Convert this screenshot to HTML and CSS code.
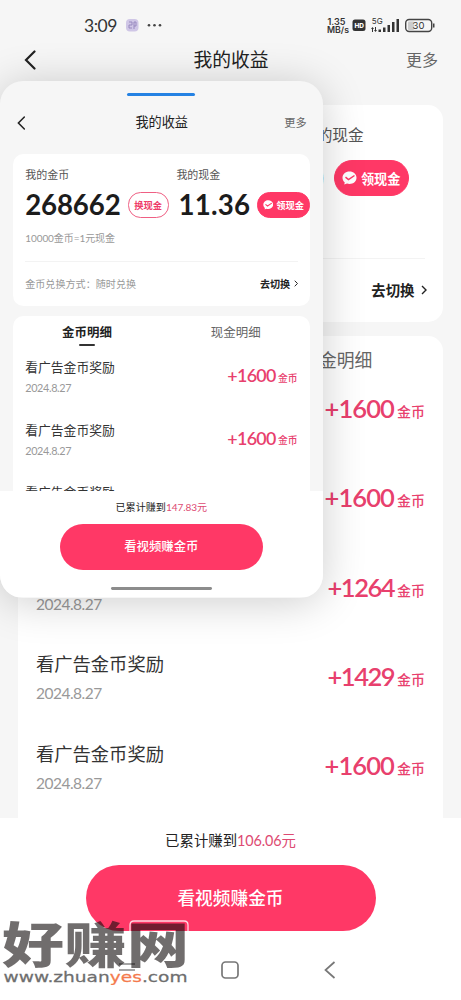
FILE: index.html
```html
<!DOCTYPE html>
<html lang="zh-CN">
<head>
<meta charset="utf-8">
<title>我的收益</title>
<link rel="stylesheet" href="styles.css">
</head>
<body>
<svg width="0" height="0" class="defs">
  <symbol id="back" viewBox="0 0 12 20"><path d="M10.500 1.500 2 10l8.500 8.500" fill="none" stroke="currentColor" stroke-width="2.200" stroke-linecap="round"/></symbol>
  <symbol id="next" viewBox="0 0 6 10"><path d="M1 1l4 4-4 4" fill="none" stroke="currentColor" stroke-width="1.400"/></symbol>
  <symbol id="badge" viewBox="0 0 15 14"><path d="M7.500.5c4 0 7 2.700 7 6.200s-3 6.200-7 6.200c-.9 0-1.800-.1-2.500-.4L2.300 13.600l.4-2.300C1.300 10.200.5 8.600.5 6.700.5 3.200 3.500.5 7.500.5z" fill="#fff"/><path d="M3.500 6.200l3 2.400L12.500 4.500" fill="none" stroke="#ff3866" stroke-width="1.500"/></symbol>
</svg>
<div class="screen">
  <div class="status">
    <span class="clock">3:09</span>
    <svg class="status-left" width="38" height="16" viewBox="0 0 38 16"><rect x="1" y="2" width="12.500" height="12.500" rx="4" fill="#cfc6e6"/><path d="M4 5h3v3H4v3h3M9 5v7M9 5h2v4H9" fill="none" stroke="#9384bb" stroke-width=".9"/><g fill="#444"><circle cx="24" cy="8.200" r="1.300"/><circle cx="29.500" cy="8.200" r="1.300"/><circle cx="35" cy="8.200" r="1.300"/></g></svg>
    <svg class="status-right" width="108" height="20" viewBox="327 15 108 20">
      <g font-family="Inter, sans-serif" fill="#333">
        <text x="327.500" y="25" font-size="8.500" font-weight="600" textLength="18" lengthAdjust="spacingAndGlyphs">1.35</text>
        <text x="327" y="33" font-size="8.500" font-weight="600" textLength="22" lengthAdjust="spacingAndGlyphs">MB/s</text>
        <rect x="352.500" y="19.500" width="13" height="11.500" rx="2.500"/>
        <text x="354.500" y="27.800" font-size="6.500" font-weight="800" fill="#fff" textLength="9.500">HD</text>
        <text x="371.800" y="24.300" font-size="8" textLength="11">5G</text>
        <path d="M371 29l1.500-2 1.500 2zM372 29h1v3h-1zM374 30h3l-1.500 2zM375 27h1v3h-1zM378.500 29.500h2.500V32h-2.500zM383 27.500h2.500V32H383zM387.500 25h2.500v7h-2.500zM392 22h2.500v10H392zM396.500 19h2.500v13h-2.500z"/>
      </g>
      <rect x="408" y="21.500" width="6" height="8.500" rx="1" fill="#ccc"/>
      <rect x="405.700" y="19.500" width="26" height="12" rx="3.500" fill="none" stroke="#444" stroke-width="1.400"/>
      <rect x="433" y="23.500" width="1.500" height="4" fill="#444"/>
      <text x="412.500" y="28.700" font-family="Inter, sans-serif" font-size="9.500" fill="#333" textLength="12">30</text>
    </svg>
  </div>

  <main class="page page-full">
    <header class="head"><svg class="back"><use href="#back"/></svg><h1>我的收益</h1><span class="more">更多</span></header>
    <section class="card balance">
      <div class="funds">
        <div class="fund"></div>
        <div class="fund"><span class="label">我的现金</span><div class="sum"><b>0</b><span class="pill solid"><svg><use href="#badge"/></svg>领现金</span></div></div>
      </div>
      <p class="rate"></p>
      <div class="switch"><span></span><strong>去切换<svg><use href="#next"/></svg></strong></div>
    </section>
    <section class="card detail">
      <nav class="tabs"><span></span><span>现金明细</span></nav>
      <div class="rows">
        <div class="row"><div></div><div class="gain">+1600<small>金币</small></div></div>
        <div class="row"><div></div><div class="gain">+1600<small>金币</small></div></div>
        <div class="row"><div class="entry"><span></span><time>2024.8.27</time></div><div class="gain narrow">+1264<small>金币</small></div></div>
        <div class="row"><div class="entry"><span>看广告金币奖励</span><time>2024.8.27</time></div><div class="gain narrow">+1429<small>金币</small></div></div>
        <div class="row"><div class="entry"><span>看广告金币奖励</span><time>2024.8.27</time></div><div class="gain">+1600<small>金币</small></div></div>
      </div>
    </section>
    <footer class="foot"><p>已累计赚到<em>106.06元</em></p><div class="cta">看视频赚金币</div>
      <div class="keys"><svg width="18" height="16" viewBox="0 0 18 16"><path d="M1 2h16M1 8h16" stroke="#888" stroke-width="1.300"/></svg><svg width="18" height="18" viewBox="0 0 18 18"><rect x="1" y="1" width="16" height="16" rx="3.500" fill="none" stroke="#777" stroke-width="1.700"/></svg><svg width="12" height="18" viewBox="0 0 12 18"><path d="M10.500 1 1.500 9l9 8" fill="none" stroke="#777" stroke-width="1.700"/></svg></div>
    </footer>
  </main>

  <div class="floating">
    <div class="grip"></div>
    <div class="page page-mini">
      <header class="head"><svg class="back"><use href="#back"/></svg><h1>我的收益</h1><span class="more">更多</span></header>
      <section class="card balance">
        <div class="funds">
          <div class="fund"><span class="label">我的金币</span><div class="sum"><b>268662</b><span class="pill">换现金</span></div></div>
          <div class="fund"><span class="label">我的现金</span><div class="sum"><b class="cash">11.36</b><span class="pill solid"><svg><use href="#badge"/></svg>领现金</span></div></div>
        </div>
        <p class="rate">10000金币=1元现金</p>
        <div class="switch"><span>金币兑换方式：随时兑换</span><strong>去切换<svg><use href="#next"/></svg></strong></div>
      </section>
      <section class="card detail">
        <nav class="tabs"><span class="on">金币明细</span><span>现金明细</span></nav>
        <div class="rows">
          <div class="row"><div class="entry"><span>看广告金币奖励</span><time>2024.8.27</time></div><div class="gain">+1600<small>金币</small></div></div>
          <div class="row"><div class="entry"><span>看广告金币奖励</span><time>2024.8.27</time></div><div class="gain">+1600<small>金币</small></div></div>
          <div class="row"><div class="entry"><span>看广告金币奖励</span></div></div>
        </div>
      </section>
      <footer class="foot"><p>已累计赚到<em>147.83元</em></p><div class="cta">看视频赚金币</div><div class="homebar"></div></footer>
    </div>
  </div>

  <svg class="watermark" width="192" height="70" viewBox="0 0 192 70">
    <g transform="translate(2 47.500) scale(1 .78)"><text font-family="Noto Sans CJK SC, sans-serif" font-weight="900" font-size="62" fill="#100c0c" fill-opacity=".6" textLength="187">好赚网</text></g>
    <path d="M130 18V10q0-4 4-4h50q4 0 4 4v8" fill="none" stroke="#fff" stroke-opacity=".8" stroke-width="1.300"/>
    <g transform="translate(3.500 66.500) scale(1 .86)"><text font-family="DejaVu Sans, sans-serif" font-size="17" fill="#6e6e6e" stroke="#6e6e6e" stroke-width=".3" textLength="184" lengthAdjust="spacingAndGlyphs">www.zhuan<tspan fill="#f47a4d" stroke="#f47a4d">yes</tspan>.com</text></g>
  </svg>
</div>
</body>
</html>
```
FILE: styles.css
```css
* { box-sizing: border-box; }
body { margin: 0; background: #f6f6f6; color: #222; font-family: Lato, "Noto Sans CJK SC", sans-serif; }
h1, p { margin: 0; font-weight: 400; }
.defs { position: absolute; }
.screen { position: relative; width: 461px; height: 1000px; overflow: hidden; background: #f6f6f6; }

.status { height: 35px; padding: 15px 26px 0 84px; display: flex; }
.clock { font-size: 17.500px; line-height: 21px; width: 41px; color: #333; letter-spacing: -.5px; }
.status-left { margin-top: 2px; }
.status-right { margin-left: auto; }

.page { width: 461px; display: flex; flex-direction: column; }
.page-full { height: 965px; }
.head { flex: none; height: 50px; padding: 0 23px 0 24px; display: grid; grid-template-columns: 80px 1fr 80px; align-items: center; }
.head .back { width: 12px; height: 20px; color: #222; }
.head h1 { text-align: center; font-size: 18.800px; line-height: 28px; position: relative; }
.more { text-align: right; font-size: 16px; color: #666; padding-bottom: 2px; }

.card { margin: 0 18px; background: #fff; border-radius: 15px; padding: 0 18px; flex: none; }
.balance { margin-top: 20px; height: 217px; }
.funds { display: flex; height: 98px; padding-top: 18px; }
.fund { flex: none; }
.page-full .fund:first-child { width: 265px; }
.page-mini .fund:first-child { width: 216px; }
.label { display: block; font-size: 15.700px; line-height: 24px; color: #555; white-space: nowrap; }
.sum { display: flex; align-items: center; height: 38px; margin-top: 12px; white-space: nowrap; }
.sum b { font-size: 39.500px; line-height: 38px; color: #1c1c1c; letter-spacing: -.2px; }
.sum .cash { margin-left: 3px; letter-spacing: .3px; }
.pill { margin-left: 10px; width: 59px; height: 36px; flex: none; border: 1.400px solid #ef5f83; border-radius: 18px; color: #ee3c69; font-size: 13.200px; font-weight: 700; display: flex; align-items: center; justify-content: center; gap: 4px; }
.pill.solid { width: 75px; background: #ff3866; border-color: #ff3866; color: #fff; }
.pill svg { width: 15px; height: 14px; }
.rate { height: 56px; padding-top: 12px; font-size: 14.300px; line-height: 22px; color: #999; border-bottom: 1px solid #f3f3f3; }
.switch { height: 61px; display: flex; align-items: center; justify-content: space-between; font-size: 14.400px; color: #999; }
.switch strong { color: #222; display: flex; align-items: center; gap: 6px; font-weight: 700; margin-right: -1.500px; }
.switch svg { width: 6px; height: 10px; }

.detail { margin-top: 14px; height: 482px; overflow: hidden; border-radius: 15px 15px 0 0; }
.tabs { height: 43px; margin: 0 -18px; display: grid; grid-template-columns: 1fr 1fr; text-align: center; font-size: 17.800px; line-height: 49px; color: #666; }
.tabs .on { position: relative; color: #222; font-weight: 700; }
.tabs .on::after { content: ""; position: absolute; left: 50%; top: 41px; width: 22px; height: 2.500px; margin-left: -11px; background: #333; border-radius: 2px; }
.page-full .rows { margin-top: -13.600px; }
.row { height: 89.300px; display: flex; align-items: center; justify-content: space-between; }
.entry { height: 53px; }
.entry span { display: block; height: 26px; line-height: 26px; font-size: 18.300px; color: #333; }
.entry time { display: block; margin-top: 5px; line-height: 22px; font-size: 15.500px; color: #999; letter-spacing: -.5px; }
.gain { display: flex; align-items: baseline; color: #e8406d; font-size: 25.500px; line-height: 30px; font-weight: 600; letter-spacing: -.9px; padding-top: 1px; }
.gain.narrow { letter-spacing: -1.500px; }
.gain small { position: relative; top: -1px; margin-left: 3px; font-size: 14px; font-weight: 500; letter-spacing: 0; }

.foot { position: relative; flex: none; height: 182px; background: #fff; text-align: center; display: flex; flex-direction: column; align-items: center; }
.foot p { padding-top: 11px; height: 47px; font-size: 14.400px; line-height: 24px; }
.foot em { font-style: normal; color: #dd4a72; letter-spacing: -.1px; }
.cta { width: 290px; height: 66px; border-radius: 33px; background: #ff3866; color: #fff; font-size: 17.700px; line-height: 67px; font-weight: 500; }
.keys { width: 218px; margin: 30px 8px 0 0; display: flex; justify-content: space-between; align-items: center; }

.floating { position: absolute; left: 0; top: 80.500px; width: 322.700px; height: 517px; border-radius: 23px; overflow: hidden; background: #f6f6f6; box-shadow: 0 4px 44px rgba(0, 0, 0, .2); }
.grip { position: absolute; left: 127px; top: 12px; width: 68px; height: 3.500px; border-radius: 2px; background: #2582e3; }
.page-mini { zoom: .7; height: 738.600px; }
.page-mini .head { margin-top: 35px; }
.page-mini .detail { height: 250.400px; }
.page-mini .foot { height: 152.200px; }
.page-mini .rate { letter-spacing: -.1px; }
.homebar { width: 144px; height: 4.500px; margin-top: 24px; border-radius: 2px; background: #8c8c8c; }
.watermark { position: absolute; left: 0; top: 915px; }
```
